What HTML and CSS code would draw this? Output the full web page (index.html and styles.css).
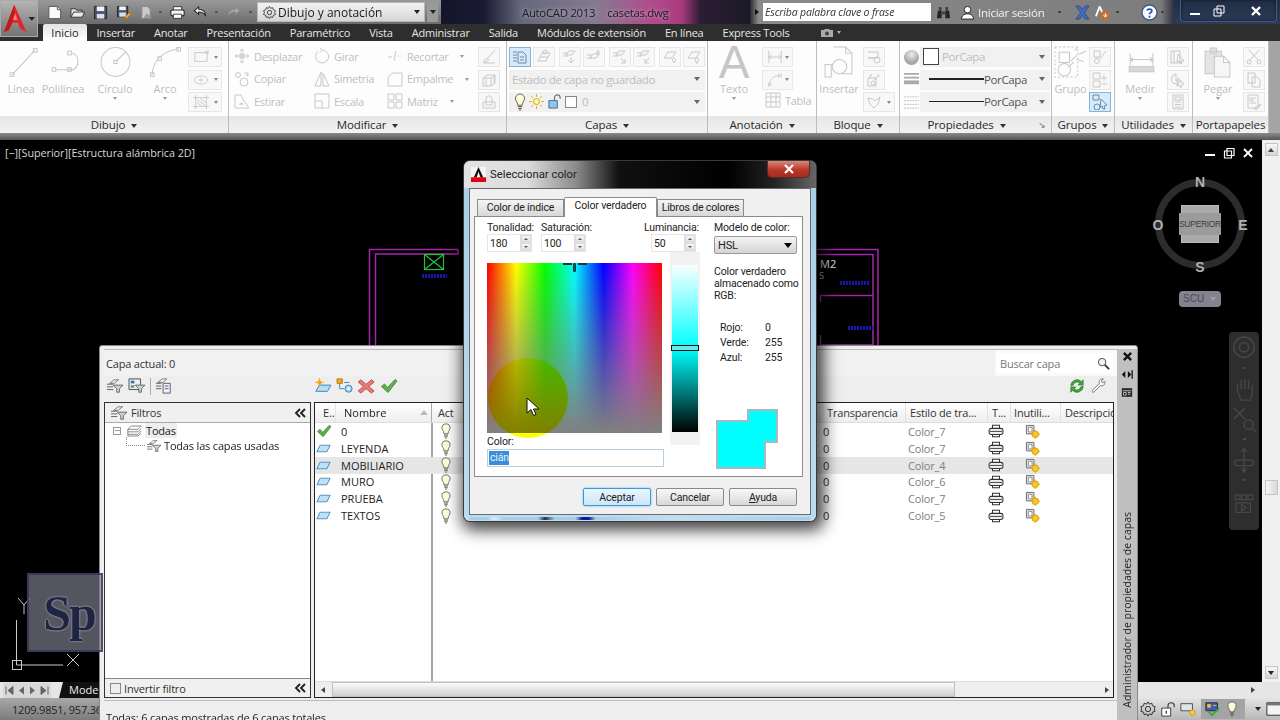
FILE: index.html
```html
<!DOCTYPE html>
<html lang="es">
<head>
<meta charset="utf-8">
<title>AutoCAD 2013 - casetas.dwg</title>
<link rel="stylesheet" href="styles.css">
</head>
<body>
<svg class="defs" aria-hidden="true">
  <symbol id="bulb" viewBox="0 0 12 18"><path d="M6 1a4.600 4.600 0 0 0-4.600 4.600c0 2 1.900 3 2.200 5.600v1h4.800v-1c.3-2.600 2.200-3.600 2.200-5.600A4.600 4.600 0 0 0 6 1z" fill="#fdfbe0" stroke="#66664e"/><path d="M3.800 13.600h4.400M4.200 15.400h3.600M5 17h2" stroke="#55553f" fill="none"/></symbol>
  <symbol id="layer" viewBox="0 0 18 10"><path d="M5 1h12l-4 8H1z" fill="#bfe1f6" stroke="#2c7db8"/></symbol>
  <symbol id="check" viewBox="0 0 18 16"><path d="M1.500 8.500l3-2.500 3 3.500L15 1.500l2 1.500L8 14.500z" fill="#5fb04a" stroke="#3c7d34" stroke-width=".8"/></symbol>
  <symbol id="printer" viewBox="0 0 18 16"><path d="M5 5V1.500h8V5M5 12v2.500h8V12" fill="#fff" stroke="#333" stroke-width="1.200"/><rect x="1" y="5" width="16" height="7" rx="2.500" fill="#eee" stroke="#333" stroke-width="1.200"/><path d="M2 8.500h14" stroke="#333"/></symbol>
  <symbol id="freeze" viewBox="0 0 16 16"><path d="M1.500 1.500h8v9h-8z" fill="#e8e8f0" stroke="#666"/><path d="M3.500 3.500h4v5h-4z" fill="#fff" stroke="#888"/><circle cx="11" cy="11" r="3.500" fill="#f8c81c" stroke="#d89a10"/><path d="M11 6v1.500M11 14.500V16M6 11h1.500M14.500 11H16" stroke="#e0a814"/></symbol>
  <symbol id="filter" viewBox="0 0 20 18"><path d="M1 7h7M1 10h7M1 13h7" stroke="#555" fill="none"/><path d="M4 6l5-4h5l-5 4z" fill="#eee" stroke="#555" stroke-width=".8"/><path d="M8 8h11l-4 4v4h-3v-4z" fill="#c8d4d8" stroke="#555" stroke-width=".9"/></symbol>
  <symbol id="chev" viewBox="0 0 12 10"><path d="M6 1L2 5l4 4M11 1L7 5l4 4" fill="none" stroke="#222" stroke-width="1.900"/></symbol>
</svg>

<div class="app">
  <header class="qbar">
    <div class="qa">
      <svg class="q" viewBox="0 0 16 16"><path d="M2 1.500h9l3.500 3.500v9.500H2z" fill="#fafafa" stroke="#555"/><path d="M11 1.500V5h3.500" fill="#ddd" stroke="#555"/></svg>
      <svg class="q" viewBox="0 0 16 16"><path d="M1 13V4h5l1 1.500h6V8" fill="#e9e2c4" stroke="#333"/><path d="M1 13l3-5.500h11.500L13 13z" fill="#e2eef5" stroke="#333"/></svg>
      <svg class="q" viewBox="0 0 16 16"><path d="M1.500 1.500h13v13h-13z" fill="#46546c" stroke="#222"/><path d="M4 1.500h8v5H4z" fill="#f2f2f2"/><path d="M4 9.500h8v5H4z" fill="#dde"/></svg>
      <svg class="q" viewBox="0 0 16 16"><path d="M1.500 1.500h11v11h-11z" fill="#46546c" stroke="#222"/><path d="M3.500 1.500h7v4h-7z" fill="#f2f2f2"/><path d="M3.500 8h7v4.500h-7z" fill="#dde"/><path d="M9 15l1-3 4-4 2 2-4 4z" fill="#f4a81c" stroke="#8a5a10" stroke-width=".6"/></svg>
      <svg class="q" viewBox="0 0 16 16"><path d="M3 1.500h6l3 3v10H3z" fill="#c9c9c9" stroke="#888"/><path d="M5 14.500l3-5 3 2 3 3z" fill="#9a9a9a" stroke="#777" stroke-width=".5"/></svg>
      <span class="dot d-plot"></span>
      <svg class="q q-print" viewBox="0 0 18 16"><path d="M4 5V1h10v4" fill="#fff" stroke="#222"/><rect x="1" y="5" width="16" height="7" rx="2" fill="#f5f5f5" stroke="#222" stroke-width="1.300"/><path d="M4 10h10v5H4z" fill="#fff" stroke="#222"/></svg>
      <svg class="q" viewBox="0 0 16 16"><path d="M6 2L1.500 6 6 10V7.500c4 0 6 1 7.500 4.500 0-5-3-7.500-7.500-7.500z" fill="#f2f2f2" stroke="#2a2a2a" stroke-width="1.100"/></svg>
      <span class="dot d-undo"></span>
      <svg class="q" viewBox="0 0 16 16"><path d="M10 2l4.500 4L10 10V7.500c-4 0-6 1-7.500 4.500 0-5 3-7.500 7.500-7.500z" fill="#a8a8a8" stroke="#8a8a8a"/></svg>
      <span class="dot d-redo"></span>
      <div class="wscombo">
        <svg class="gear" viewBox="0 0 16 16"><circle cx="8" cy="8" r="2.300" fill="none" stroke="#333"/><path d="M8 1.500l1.200 2 2.300-.6.600 2.300 2.300.9-1 2 1 2-2.300.8-.6 2.300-2.300-.6L8 14.500l-1.200-1.900-2.300.6-.6-2.300-2.300-.8 1-2-1-2 2.300-.9.600-2.300 2.300.6z" fill="none" stroke="#333" stroke-width=".9"/></svg>
        <span class="wstext">Dibujo y anotación</span>
        <span class="caret caret-dark"></span>
      </div>
      <span class="morebox"><span class="caret caret-dark"></span></span>
    </div>
    <div class="titlezone"><span class="title1">AutoCAD 2013</span><span class="title2">casetas.dwg</span></div>
    <div class="helpzone">
      <span class="tri-right"></span>
      <span class="search">Escriba palabra clave o frase</span>
      <svg class="hi hi-bino" viewBox="0 0 16 16"><path d="M2 6h4v8H1zM10 6h4l1 8h-5z" fill="#222"/><path d="M3 2h3v4H3zM10 2h3v4h-3zM6 7h4v3H6z" fill="#444"/></svg>
      <svg class="hi hi-user" viewBox="0 0 16 16"><circle cx="8" cy="5" r="3.500" fill="#fff" stroke="#222"/><path d="M1.500 15c.5-4 3-5.500 6.500-5.500s6 1.500 6.500 5.500z" fill="#fff" stroke="#222"/></svg>
      <span class="signin">Iniciar sesión</span>
      <span class="dot d-light d-sign"></span>
      <svg class="hi hi-x" viewBox="0 0 16 16"><path d="M1 1h4l3 4 3-4h4l-5 7 5 7h-4l-3-4-3 4H1l5-7z" fill="#3f6fc4" stroke="#1c2f70" stroke-width=".6"/></svg>
      <svg class="hi hi-a" viewBox="0 0 16 16"><path d="M5 1.500L1 12M5 1.500l3 7" stroke="#fff" stroke-width="2" fill="none"/><rect x="7" y="7" width="8" height="8" fill="#d4691c"/><path d="M11 8.500v3.500M9 10.500l2 2.500 2-2.500" stroke="#fff" fill="none"/></svg>
      <span class="dot d-light d-a"></span>
      <svg class="hi hi-help" viewBox="0 0 18 18"><circle cx="9" cy="9" r="8" fill="#f8fbff" stroke="#3c5a8c" stroke-width="1.500"/><path d="M6.500 7c0-2 5-2.500 5 .3 0 1.700-2.500 1.700-2.500 3.500M9 12.500v2" fill="none" stroke="#2a54a0" stroke-width="1.800"/></svg>
      <span class="dot d-light d-help"></span>
    </div>
    <div class="winctl">
      <div class="winbox">
        <svg class="wc" viewBox="0 0 12 12"><path d="M1 8h10v2H1z" fill="#fff"/></svg>
        <svg class="wc" viewBox="0 0 12 12"><path d="M4 1h7v7H4zM1 4h7v7H1z" fill="#23324a" stroke="#fff"/></svg>
        <svg class="wc wc-x" viewBox="0 0 12 12"><path d="M2 2l8 8M10 2l-8 8" stroke="#fff" stroke-width="2.400"/></svg>
      </div>
    </div>
  </header>

  <nav class="tabs">
    <span class="tab tab-on">Inicio</span><span class="tab">Insertar</span><span class="tab">Anotar</span><span class="tab">Presentación</span><span class="tab">Paramétrico</span><span class="tab">Vista</span><span class="tab">Administrar</span><span class="tab">Salida</span><span class="tab">Módulos de extensión</span><span class="tab">En línea</span><span class="tab">Express Tools</span>
    <svg class="cam" viewBox="0 0 14 10"><path d="M1 2h3l1-1h4l1 1h3v7H1z" fill="#aaa"/><circle cx="7" cy="5.500" r="2" fill="#444"/></svg><span class="caret caret-tab"></span>
  </nav>

  <section class="ribbon">
    <div class="panel p-draw">
      <div class="body">
        <div class="tool w42"><svg class="big pale" viewBox="0 0 32 32"><path d="M7 28L29 4"/><rect x="5" y="26" width="3.500" height="3.500"/><rect x="27.500" y="2.500" width="3.500" height="3.500"/></svg><span class="lbl">Línea</span></div>
        <div class="tool w42"><svg class="big pale" viewBox="0 0 32 32"><path d="M8 23h16M24 7c8 0 8 16 0 16"/><rect x="5" y="21" width="3.500" height="3.500"/><rect x="20" y="21" width="3.500" height="3.500"/><rect x="20" y="5" width="3.500" height="3.500"/></svg><span class="lbl">Polilínea</span></div>
        <div class="tool w62"><svg class="big pale" viewBox="0 0 32 32"><circle cx="16" cy="15.500" r="14"/><rect x="14.500" y="14" width="3" height="3"/><path d="M17 14.500l9-9"/></svg><span class="lbl">Círculo</span><span class="caret caret-pale"></span></div>
        <div class="tool w38"><svg class="big pale" viewBox="0 0 32 32"><path d="M3 28C4 15 12 5 29 3"/><rect x="1.500" y="26" width="3.500" height="3.500"/><rect x="8.500" y="10.500" width="3.500" height="3.500"/><rect x="27" y="1.500" width="3.500" height="3.500"/></svg><span class="lbl">Arco</span><span class="caret caret-pale"></span></div>
        <div class="sbcol">
          <div class="sb"><svg class="ic pale" viewBox="0 0 18 16"><path d="M2 3h14v10H2z"/><rect x="14.500" y="1.500" width="2.500" height="2.500"/></svg><span class="sbarrow"></span></div>
          <div class="sb"><svg class="ic pale" viewBox="0 0 18 16"><ellipse cx="9" cy="8" rx="7.500" ry="4.500"/><circle cx="9" cy="8" r="1.500"/></svg><span class="sbarrow"></span></div>
          <div class="sb"><svg class="ic pale" viewBox="0 0 18 16"><path d="M3 0v16M15 0v16M0 3h18M0 13h18M4 5l10 7M4 8l6 5M8 4l7 5"/></svg><span class="sbarrow"></span></div>
        </div>
      </div>
      <div class="ptitle">Dibujo <span class="caret"></span></div>
    </div>

    <div class="panel p-mod">
      <div class="body">
        <div class="modgrid">
          <div class="mi"><svg class="ic pale" viewBox="0 0 16 16"><path d="M8 1v14M1 8h14M6 3l2-2 2 2M6 13l2 2 2-2M3 6L1 8l2 2M13 6l2 2-2 2"/><rect x="6" y="6" width="4" height="4"/></svg>Desplazar</div>
          <div class="mi"><svg class="ic pale" viewBox="0 0 16 16"><path d="M4 3.500A6.500 6.500 0 1 0 9 2M6 0l2.500 2L6 4.500"/></svg>Girar</div>
          <div class="mi"><svg class="ic pale" viewBox="0 0 16 16"><path d="M1 9h4M9 3L7 13M11 8h1M14 8h1"/></svg>Recortar<span class="caret caret-pale ml"></span></div>
          <div class="mi"><svg class="ic pale" viewBox="0 0 16 16"><circle cx="4" cy="4" r="2.500"/><circle cx="10" cy="11" r="4"/><path d="M10 2h4v3M14 5l-2-1"/></svg>Copiar</div>
          <div class="mi"><svg class="ic pale" viewBox="0 0 16 16"><path d="M7 1v14H1zM9 2v13h6z"/></svg>Simetría</div>
          <div class="mi"><svg class="ic pale" viewBox="0 0 16 16"><path d="M1 15V9c0-4 3-7 7-7h7v13z"/></svg>Empalme<span class="caret caret-pale ml"></span></div>
          <div class="mi"><svg class="ic pale" viewBox="0 0 16 16"><path d="M1 2h6l3 6 5 7H1zM5 11h4l-2-1v2"/></svg>Estirar</div>
          <div class="mi"><svg class="ic pale" viewBox="0 0 16 16"><path d="M1 8V1h14v14H8"/><path d="M1 8h7v7H1z"/></svg>Escala</div>
          <div class="mi"><svg class="ic pale" viewBox="0 0 16 16"><path d="M1 1h6v6H1zM9 1h6v6H9zM1 9h6v6H1zM9 9h6v6H9z"/></svg>Matriz<span class="caret caret-pale ml"></span></div>
        </div>
        <div class="btncol">
          <div class="bt"><svg class="ic pale" viewBox="0 0 16 16"><path d="M14 1L6 10M2 14h12M3 13c0-3 3-4 4-3s0 3-4 3z"/></svg></div>
          <div class="bt"><svg class="ic pale" viewBox="0 0 16 16"><path d="M2 6l4-3h8v8l-4 3H2zM2 6h8v8M10 6l4-3M5 6v8M13 3v8"/></svg></div>
          <div class="bt"><svg class="ic pale" viewBox="0 0 16 16"><path d="M2 14V8h3V3c3-2 6-1 6 2v3h3v6z"/><path d="M5 8h6v3H5z"/></svg></div>
        </div>
      </div>
      <div class="ptitle">Modificar <span class="caret"></span></div>
    </div>

    <div class="panel p-layer">
      <div class="body bcol">
        <div class="lyicons">
          <div class="bt bt-on"><svg class="ic blueic" viewBox="0 0 16 16"><path d="M1 3h4M1 6h4M1 9h4M1 12h4"/><path d="M6 3h5l3 3v8H6z"/><path d="M8 8h4M8 11h4"/></svg></div>
          <div class="bt"><svg class="ic pale" viewBox="0 0 16 16"><path d="M4 8l2-4h8l-2 4zM2 12l2-4M2 12h8l2-4"/><circle cx="9" cy="3" r="2"/></svg></div>
          <div class="gapr"></div>
          <div class="bt"><svg class="ic pale" viewBox="0 0 16 16"><path d="M1 4h5M1 7h5M7 2h6l-3 4H4zM9 8v6M6 11l3 3 3-3"/></svg></div>
          <div class="bt"><svg class="ic pale" viewBox="0 0 16 16"><path d="M1 6h5M1 9h5M7 5h6l-3 4H4zM12 1l2 3h-4zM12 4v3"/></svg></div>
          <div class="gapr"></div>
          <div class="bt"><svg class="ic pale" viewBox="0 0 16 16"><path d="M1 4h5M1 7h5M7 2h6l-3 4H4zM9 9l4 5M13 10v4H9"/></svg></div>
          <div class="bt"><svg class="ic pale" viewBox="0 0 16 16"><path d="M1 4h5M1 7h5M7 2h6l-3 4H4zM13 9l-4 5M9 10v4h4"/></svg></div>
          <div class="gapr"></div>
          <div class="bt"><svg class="ic pale" viewBox="0 0 16 16"><path d="M2 9l4-6h8l-4 6zM10 11l2-2 2 2-2 3z"/></svg></div>
          <div class="bt"><svg class="ic pale" viewBox="0 0 16 16"><path d="M2 9l4-6h8l-4 6z"/><path d="M11 9c2 0 2 3 1 3v2h-2v-2c-1 0-1-3 1-3z"/></svg></div>
        </div>
        <div class="combo"><span class="ctext">Estado de capa no guardado</span><span class="caret caret-mid"></span></div>
        <div class="combo"><svg class="cb-bulb" viewBox="0 0 12 18"><use href="#bulb"/></svg>
          <svg class="cb-ic" viewBox="0 0 16 16"><circle cx="8" cy="8" r="3.200" fill="#fff6c0" stroke="#c8a400"/><path d="M8 0v3M8 13v3M0 8h3M13 8h3M2.300 2.300l2 2M11.700 11.700l2 2M2.300 13.700l2-2M11.700 4.300l2-2" stroke="#d2b000"/></svg>
          <svg class="cb-ic" viewBox="0 0 16 16"><path d="M2 7h9v8H2z" fill="#8fc6e8" stroke="#3b6f94"/><path d="M8 7V4c0-4 6-4 6 0v1" fill="none" stroke="#777" stroke-width="1.300"/></svg>
          <span class="swatch"></span><span class="ctext zero">0</span><span class="caret caret-mid"></span></div>
      </div>
      <div class="ptitle">Capas <span class="caret"></span></div>
    </div>

    <div class="panel p-anno">
      <div class="body">
        <div class="tool w52"><span class="bigA">A</span><span class="lbl">Texto</span><span class="caret caret-pale"></span></div>
        <div class="anno-right">
          <div class="sb sb-a"><svg class="ic pale" viewBox="0 0 18 16"><path d="M2 1v14M16 1v14M2 8h14M2 8l3-2M2 8l3 2M16 8l-3-2M16 8l-3 2"/></svg><span class="sbarrow"></span></div>
          <div class="sb sb-a"><svg class="ic pale" viewBox="0 0 18 16"><path d="M2 15c1-7 4-11 11-12"/><circle cx="3" cy="13" r="1.500"/><rect x="13" y="1.500" width="3" height="3"/></svg><span class="sbarrow"></span></div>
          <div class="mi"><svg class="ic pale ic-t" viewBox="0 0 16 16"><path d="M1 1h14v14H1zM1 5h14M1 10h14M6 1v14M11 1v14"/></svg>Tabla</div>
        </div>
      </div>
      <div class="ptitle">Anotación <span class="caret"></span></div>
    </div>

    <div class="panel p-block">
      <div class="body">
        <div class="tool w44"><svg class="big pale" viewBox="0 0 32 32"><path d="M10 1h12l6 6v20H18"/><path d="M22 1v6h6M2 18h6v12H2z"/><circle cx="16" cy="20" r="7"/></svg><span class="lbl">Insertar</span></div>
        <div class="btncol btncol-b">
          <div class="bt"><svg class="ic pale" viewBox="0 0 16 16"><path d="M2 3h10v6H2M2 9h6"/><circle cx="11" cy="11" r="3"/></svg></div>
          <div class="bt"><svg class="ic pale" viewBox="0 0 16 16"><path d="M2 6h8v8H2zM4 6V3h2M12 2l1 3M8 8l4-4"/><circle cx="7" cy="11" r="2"/></svg></div>
          <div class="bt bt-arrow"><svg class="ic pale" viewBox="0 0 16 16"><path d="M2 4l5 1 2 2 5-4-2 7-4 4-4-4z"/></svg><span class="sbarrow"></span></div>
        </div>
      </div>
      <div class="ptitle">Bloque <span class="caret"></span></div>
    </div>

    <div class="panel p-prop">
      <div class="body bcol propgrid">
        <div class="proprow"><span class="colorball"></span><div class="combo combo-p"><span class="swatch swatch-l"></span><span class="ctext">PorCapa</span><span class="caret caret-mid"></span></div></div>
        <div class="proprow"><svg class="lnic" viewBox="0 0 16 16"><path d="M0 2h16M0 6h16" stroke="#aaa" stroke-width="2"/><path d="M0 11h16" stroke="#aaa" stroke-width="4"/></svg><div class="combo combo-p"><span class="lnline"></span><span class="ctext dark">PorCapa</span><span class="caret caret-mid"></span></div></div>
        <div class="proprow"><svg class="lnic" viewBox="0 0 16 16"><path d="M0 2h16M0 6h16M0 10h16M0 14h16" stroke="#bbb" stroke-dasharray="2 1"/></svg><div class="combo combo-p"><span class="lnline lnline-b"></span><span class="ctext dark">PorCapa</span><span class="caret caret-mid"></span></div></div>
      </div>
      <div class="ptitle ptitle-prop"><span>Propiedades <span class="caret"></span></span><span class="launcher">↘</span></div>
    </div>

    <div class="panel p-group">
      <div class="body">
        <div class="tool w36"><svg class="big pale" viewBox="0 0 32 32"><path d="M1 1h22v29H1z" stroke-dasharray="2 2"/><path d="M5 6h10v10H5z"/><circle cx="10" cy="23" r="6"/><path d="M16 15l6-6M20 4l3-3M24 8l7-3M22 13l7 2M14 20l5-4"/></svg><span class="lbl">Grupo</span></div>
        <div class="btncol btncol-g">
          <div class="bt"><svg class="ic pale" viewBox="0 0 16 16"><path d="M2 2h6v6H2z"/><circle cx="5" cy="12" r="2.500"/><path d="M8 10l6-8"/></svg></div>
          <div class="bt"><svg class="ic pale" viewBox="0 0 16 16"><path d="M1 1h7v6H1zM1 9h7v6H1zM12 3v6M9 6h6M10 12h5"/></svg></div>
          <div class="bt bt-on"><svg class="ic blueic" viewBox="0 0 16 16"><path d="M1 1h6v5H1zM2 13a3 3 0 1 0 6 0 3 3 0 1 0-6 0M9 5l6 6-3 1 1 3-2 0-1-3-2 2z"/></svg></div>
        </div>
      </div>
      <div class="ptitle">Grupos <span class="caret"></span></div>
    </div>

    <div class="panel p-util">
      <div class="body">
        <div class="tool w50"><svg class="big pale" viewBox="0 0 32 32"><path d="M6 7v12M28 7v12M6 13h22M6 13l3-2M6 13l3 2M28 13l-3-2M28 13l-3 2"/><rect x="5" y="20" width="24" height="5" fill="#d8d8d8"/></svg><span class="lbl">Medir</span><span class="caret caret-pale"></span></div>
        <div class="btncol btncol-u">
          <div class="bt"><svg class="ic pale" viewBox="0 0 16 16"><path d="M1 2h9v12H1zM4 2v12M8 5l6 7-3 0 1 3-2-1-1-2-2 1z"/></svg></div>
          <div class="bt"><svg class="ic pale" viewBox="0 0 16 16"><path d="M6 2a5 5 0 1 0 5 7H6zM8 6l6 6-3 1 1 2-2 0-1-2-2 1z"/></svg></div>
          <div class="bt"><svg class="ic pale" viewBox="0 0 16 16"><path d="M3 1h10v14H3zM5 3h6v3H5zM5 8h6M5 10.500h6M5 13h6"/></svg></div>
        </div>
      </div>
      <div class="ptitle">Utilidades <span class="caret"></span></div>
    </div>

    <div class="panel p-clip">
      <div class="body">
        <div class="tool w50"><svg class="big pale" viewBox="0 0 32 32"><path d="M3 5h16v22H3zM8 2h6v5H8z" fill="#e4e4e4"/><path d="M12 10h9l6 6v14H12zM21 10v6h6" fill="#f6f6f6"/></svg><span class="lbl">Pegar</span><span class="caret caret-pale"></span></div>
        <div class="btncol">
          <div class="bt"><svg class="ic pale" viewBox="0 0 16 16"><path d="M3 1l9 10M13 1L4 11"/><circle cx="3" cy="13" r="2"/><circle cx="13" cy="13" r="2"/></svg></div>
          <div class="bt"><svg class="ic pale" viewBox="0 0 16 16"><path d="M2 1h7v10H2zM6 5h5l3 3v7H6z"/></svg></div>
          <div class="bt"><svg class="ic pale" viewBox="0 0 16 16"><path d="M2 1h10v13H2zM4 4h3v3H4zM8 4h2M4 9h6"/><path d="M8 15l6-5 1 1-5 5z"/></svg></div>
        </div>
      </div>
      <div class="ptitle">Portapapeles</div>
    </div>
    <div class="ribbon-end"></div>
  </section>
  <div class="sep"></div>

  <main class="work">
    <div class="viewrow">
      <div class="viewport">
        <span class="vplabel">[−][Superior][Estructura alámbrica 2D]</span>
        <svg class="cad" viewBox="0 0 1262 542" aria-hidden="true">
          <g fill="none" stroke="#a526a8" stroke-width="1.500">
            <path d="M369.500 205V109.500H458M458 109.500V114H375.500V205"/>
            <path d="M817 109.500H878V205M817 114.500H873V205M820.500 162V155.500H873M820.500 195V205H873"/>
          </g>
          <g fill="none" stroke="#1fc43a" stroke-width="1.200"><rect x="424.500" y="114.500" width="19" height="15"/><path d="M424.500 114.500l19 15M443.500 114.500l-19 15"/></g>
          <path d="M422 136h25M840 143h29M848 188h25" stroke="#1616b0" stroke-width="4" stroke-dasharray="2 1" fill="none"/>
          <g fill="none" stroke="#c8c8c8"><path d="M16.500 480V525H63"/><rect x="12.500" y="520.500" width="9" height="9"/><path d="M67 514l12 12M79 514l-12 12M18 458l6 7 6-7M24 465v9"/></g>
        </svg>
        <span class="m2">M2</span><span class="m2s">S</span>
        <div class="vpctl">
          <svg class="vc" viewBox="0 0 12 12"><path d="M1 7h10v2H1z" fill="#fff"/></svg>
          <svg class="vc" viewBox="0 0 12 12"><path d="M4 1.500h7v7H4zM1.500 4h7v7h-7z" fill="#000" stroke="#fff" stroke-width="1.200"/></svg>
          <svg class="vc" viewBox="0 0 12 12"><path d="M2 2l8 8M10 2l-8 8" stroke="#fff" stroke-width="1.800"/></svg>
        </div>
        <div class="compass">
          <span class="ring"></span>
          <span class="cubeface"><span class="cubein">SUPERIOR</span></span>
          <span class="cd cd-n">N</span><span class="cd cd-s">S</span><span class="cd cd-e">E</span><span class="cd cd-o">O</span>
        </div>
        <div class="scu">SCU <span class="caret caret-scu"></span></div>
        <div class="navbar">
          <svg class="nv" viewBox="0 0 26 30"><circle cx="13" cy="13" r="11"/><circle cx="13" cy="13" r="5"/></svg><span class="nvdot"></span>
          <svg class="nv" viewBox="0 0 26 30"><path d="M6 16V9M10 14V4M14 14V3M18 14V5M22 18V9M6 16l4 10h10l2-8"/></svg>
          <svg class="nv" viewBox="0 0 26 30"><path d="M2 2l12 12M14 2L2 14"/><circle cx="18" cy="20" r="5"/><path d="M22 24l4 4"/></svg><span class="nvdot"></span>
          <svg class="nv" viewBox="0 0 26 30"><path d="M13 1v26M5 14h16c3 0 3 6 0 6H5c-3 0-3-6 0-6zM10 5l3-4 3 4M10 23l3 4 3-4"/></svg><span class="nvdot"></span>
          <svg class="nv nv-last" viewBox="0 0 26 30"><path d="M2 1h6v6H2zM10 1h6v6h-6zM18 1h6v6h-6zM3 11h18v12H3zM10 13l6 4-6 4z"/></svg>
        </div>
      </div>
      <div class="vscroll"><span class="sbtn"><span class="sbtn-tri"></span></span><span class="sthumb"></span><span class="sbtn"><span class="caret caret-dark"></span></span></div>
    </div>
    <div class="modelrow">
      <div class="navbtns">
        <svg class="nb" viewBox="0 0 12 12"><path d="M3 2v8M10 2L5 6l5 4z" stroke="#666" fill="#666"/></svg>
        <svg class="nb" viewBox="0 0 12 12"><path d="M9 2L4 6l5 4z" fill="#666"/></svg>
        <svg class="nb" viewBox="0 0 12 12"><path d="M3 2l5 4-5 4z" fill="#666"/></svg>
        <svg class="nb" viewBox="0 0 12 12"><path d="M9 2v8M2 2l5 4-5 4z" stroke="#666" fill="#666"/></svg>
      </div>
      <span class="modeltab">Model</span>
      <span class="hscroll-r"><span class="tri-right tri-r2"></span></span>
    </div>
    <footer class="status">
      <span class="coords">1209.9851, 957.36</span>
      <div class="trayic">
        <svg class="ti" viewBox="0 0 18 18"><circle cx="9" cy="9" r="3" fill="none" stroke="#222"/><path d="M9 1l1.500 2.500 2.800-1 .7 3 3 .8-1 2.700 1 2.700-3 .8-.7 3-2.800-1L9 17l-1.500-2.500-2.800 1-.7-3-3-.8 1-2.700-1-2.700 3-.8.7-3 2.800 1z" fill="none" stroke="#222"/></svg>
        <svg class="ti" viewBox="0 0 18 18"><path d="M2 8h10v9H2z" fill="#fff" stroke="#333"/><path d="M9 8V5c0-4 7-4 7 0v2" fill="none" stroke="#333" stroke-width="1.200"/><path d="M7 11v3" stroke="#333" stroke-width="1.500"/></svg>
        <svg class="ti" viewBox="0 0 18 18"><path d="M1 3h13v8H1z" fill="#dfe4ea" stroke="#444"/><circle cx="14" cy="13" r="3" fill="#f8cc30" stroke="#c89a10"/></svg>
        <span class="trayon">
          <svg class="ti" viewBox="0 0 18 18"><path d="M1 2h13v9H1z" fill="#3a5fb4" stroke="#222"/><path d="M3 4h3v3H3zM9 5h4" fill="#f6c030" stroke="#f6c030"/><path d="M4 12l4 4 8-8" fill="none" stroke="#3aa83a" stroke-width="2"/></svg>
          <svg class="ti ti-b" viewBox="0 0 12 18"><use href="#bulb"/></svg>
        </span>
        <span class="caret caret-dark cm"></span>
        <svg class="ti ti-win" viewBox="0 0 18 18"><path d="M1 2h16v14H1z" fill="#f4f4f4" stroke="#222"/><path d="M1 2h16v3H1z" fill="#777"/></svg>
      </div>
    </footer>
  </main>

  <aside class="palette">
    <div class="palmain">
      <div class="palhead"><span class="current">Capa actual: 0</span><span class="findbox">Buscar capa<svg class="mag" viewBox="0 0 14 14"><circle cx="5.500" cy="5.500" r="4" fill="#eef3f7" stroke="#444"/><path d="M8.500 8.500L13 13" stroke="#333" stroke-width="2"/></svg></span></div>
      <div class="paltool">
        <svg class="pi" viewBox="0 0 20 18"><use href="#filter"/></svg>
        <svg class="pi" viewBox="0 0 20 18"><path d="M1 1h13v12H1z" fill="#e6eef4" stroke="#444"/><path d="M3 3h4v3H3z" fill="#3a6fb0"/><path d="M3 8h4v3H3z" fill="#888"/><path d="M8 8h11l-4 4v4h-3v-4z" fill="#c8d4d8" stroke="#555" stroke-width=".9"/></svg>
        <span class="psep"></span>
        <svg class="pi" viewBox="0 0 20 18"><path d="M1 6h6M1 9h6M1 12h6" stroke="#555"/><path d="M3 5l5-4h5l-4 4z" fill="#eee" stroke="#555" stroke-width=".8"/><path d="M9 6h8v11H9z" fill="#eef" stroke="#555"/><path d="M11 9h4M11 12h4" stroke="#555"/></svg>
        <span class="pspacer"></span>
        <svg class="pi" viewBox="0 0 20 18"><path d="M6 8h13l-4 7H2z" fill="#b8def6" stroke="#2c7db8"/><circle cx="6" cy="5" r="2.500" fill="#f3a81c"/><path d="M6 0v10M1 5h10" stroke="#f3a81c"/></svg>
        <svg class="pi" viewBox="0 0 20 18"><path d="M1 1h6v5H1z" fill="#f3a81c" stroke="#b8740c"/><path d="M9 5h6M4 6v6h5" stroke="#2c7db8" fill="none"/><circle cx="14" cy="12" r="4" fill="#a8d2ec" stroke="#2c7db8"/><circle cx="14" cy="12" r="1.500" fill="#fff"/></svg>
        <svg class="pi" viewBox="0 0 20 18"><path d="M3 2l6 5 6-5 3 2.500-6 5 6 5-3 2.500-6-5-6 5-3-2.500 6-5-6-5z" fill="#e87a7a" stroke="#b03232" stroke-width=".8"/></svg>
        <svg class="pi" viewBox="0 0 18 16"><use href="#check"/></svg>
        <span class="pspacer2"></span>
        <svg class="pi" viewBox="0 0 18 18"><path d="M2 9a7 7 0 0 1 12-5l2-2v6h-6l2-2a4 4 0 0 0-7 2zM16 9a7 7 0 0 1-12 5l-2 2v-6h6l-2 2a4 4 0 0 0 7-2z" fill="#3fa63f" stroke="#1f6a25" stroke-width=".6"/></svg>
        <svg class="pi" viewBox="0 0 18 18"><path d="M1.500 14l8-8c-1-3 1-5.500 4.500-5L11.500 3.500 13 5.500 15.500 4c.7 3.500-2 5.500-5 4.500l-8 8z" fill="#fff" stroke="#666"/></svg>
      </div>
      <div class="split">
        <div class="filters">
          <div class="fhead"><svg class="pi" viewBox="0 0 20 18"><use href="#filter"/></svg><span class="ftitle">Filtros</span><svg class="chev" viewBox="0 0 12 10"><use href="#chev"/></svg></div>
          <div class="ftree">
            <div class="tnode"><span class="minus"></span><svg class="tic" viewBox="0 0 18 14"><path d="M5 1h12l-4 4H1zM1 5v3h12l4-4M1 8v3h12l4-4M1 11v2h12l4-3" fill="#fff" stroke="#555" stroke-width=".8"/></svg><span class="tselect">Todas</span></div>
            <div class="tnode tnode-2"><span class="telbow"></span><svg class="tic tic2" viewBox="0 0 20 18"><use href="#filter"/></svg><span>Todas las capas usadas</span></div>
          </div>
          <div class="ffoot"><span class="chk"></span><span class="ftitle">Invertir filtro</span><svg class="chev" viewBox="0 0 12 10"><use href="#chev"/></svg></div>
        </div>
        <div class="table">
          <div class="row thead">
            <span class="c c-e">E..</span><span class="c c-n">Nombre<i class="sort"></i></span><span class="c c-a">Act</span><span class="c c-t hgap">Transparencia</span><span class="c c-s hgap2">Estilo de tra...</span><span class="c c-p hgap2">T...</span><span class="c c-u hgap2">Inutili...</span><span class="c c-d hgap2">Descripción</span>
          </div>
          <div class="tbody">
            <div class="row"><span class="c c-e"><svg class="chk-ic" viewBox="0 0 18 16"><use href="#check"/></svg></span><span class="c c-n">0</span><span class="c c-a"><svg class="bulb" viewBox="0 0 12 18"><use href="#bulb"/></svg></span><span class="c c-t">0</span><span class="c c-s">Color_7</span><span class="c c-p"><svg class="print" viewBox="0 0 18 16"><use href="#printer"/></svg></span><span class="c c-u"><svg class="frz" viewBox="0 0 16 16"><use href="#freeze"/></svg></span><span class="c c-d"></span></div>
            <div class="row"><span class="c c-e"><svg class="ly-ic" viewBox="0 0 18 10"><use href="#layer"/></svg></span><span class="c c-n">LEYENDA</span><span class="c c-a"><svg class="bulb" viewBox="0 0 12 18"><use href="#bulb"/></svg></span><span class="c c-t">0</span><span class="c c-s">Color_7</span><span class="c c-p"><svg class="print" viewBox="0 0 18 16"><use href="#printer"/></svg></span><span class="c c-u"><svg class="frz" viewBox="0 0 16 16"><use href="#freeze"/></svg></span><span class="c c-d"></span></div>
            <div class="row row-sel"><span class="c c-e"><svg class="ly-ic" viewBox="0 0 18 10"><use href="#layer"/></svg></span><span class="c c-n">MOBILIARIO</span><span class="c c-a"><svg class="bulb" viewBox="0 0 12 18"><use href="#bulb"/></svg></span><span class="c c-t">0</span><span class="c c-s">Color_4</span><span class="c c-p"><svg class="print" viewBox="0 0 18 16"><use href="#printer"/></svg></span><span class="c c-u"><svg class="frz" viewBox="0 0 16 16"><use href="#freeze"/></svg></span><span class="c c-d"></span></div>
            <div class="row"><span class="c c-e"><svg class="ly-ic" viewBox="0 0 18 10"><use href="#layer"/></svg></span><span class="c c-n">MURO</span><span class="c c-a"><svg class="bulb" viewBox="0 0 12 18"><use href="#bulb"/></svg></span><span class="c c-t">0</span><span class="c c-s">Color_6</span><span class="c c-p"><svg class="print" viewBox="0 0 18 16"><use href="#printer"/></svg></span><span class="c c-u"><svg class="frz" viewBox="0 0 16 16"><use href="#freeze"/></svg></span><span class="c c-d"></span></div>
            <div class="row"><span class="c c-e"><svg class="ly-ic" viewBox="0 0 18 10"><use href="#layer"/></svg></span><span class="c c-n">PRUEBA</span><span class="c c-a"><svg class="bulb" viewBox="0 0 12 18"><use href="#bulb"/></svg></span><span class="c c-t">0</span><span class="c c-s">Color_7</span><span class="c c-p"><svg class="print" viewBox="0 0 18 16"><use href="#printer"/></svg></span><span class="c c-u"><svg class="frz" viewBox="0 0 16 16"><use href="#freeze"/></svg></span><span class="c c-d"></span></div>
            <div class="row"><span class="c c-e"><svg class="ly-ic" viewBox="0 0 18 10"><use href="#layer"/></svg></span><span class="c c-n">TEXTOS</span><span class="c c-a"><svg class="bulb" viewBox="0 0 12 18"><use href="#bulb"/></svg></span><span class="c c-t">0</span><span class="c c-s">Color_5</span><span class="c c-p"><svg class="print" viewBox="0 0 18 16"><use href="#printer"/></svg></span><span class="c c-u"><svg class="frz" viewBox="0 0 16 16"><use href="#freeze"/></svg></span><span class="c c-d"></span></div>
          </div>
          <div class="tscroll"><span class="tri-left"></span><span class="tthumb"></span><span class="tri-right tri-r3"></span></div>
        </div>
      </div>
      <div class="palstatus">Todas: 6 capas mostradas de 6 capas totales</div>
    </div>
    <div class="palstrip">
      <svg class="strip-x" viewBox="0 0 12 12"><path d="M2 2l8 8M10 2l-8 8" stroke="#111" stroke-width="2.500"/></svg>
      <svg class="strip-i" viewBox="0 0 14 12"><path d="M5 2L1 6l4 4zM8 2l4 4-4 4z" fill="#111"/><path d="M13 1v10" stroke="#111" stroke-width="1.500"/></svg>
      <svg class="strip-i" viewBox="0 0 14 12"><path d="M1 1h12v10H1z" fill="#222"/><path d="M2 4h10M3 6h3v3H3zM8 6h3M8 8h3" stroke="#ddd"/></svg>
      <span class="striptext">Administrador de propiedades de capas</span>
    </div>
  </aside>

  <div class="sp"><span class="sptext">Sp</span></div>

  <div class="dialog">
    <div class="dtitle">
      <svg class="dlogo" viewBox="0 0 16 16"><path d="M0 0h16v11H0z" fill="#f4f4f4"/><path d="M0 11h16v5H0z" fill="#e8000c"/><path d="M8 0l5 11h-3L8 5l-2 6H3z" fill="#111"/></svg>
      <span class="dtext">Seleccionar color</span>
      <span class="dclose"><svg viewBox="0 0 12 10" class="dx"><path d="M2 1l8 8M10 1L2 9" stroke="#fff" stroke-width="2.200"/></svg></span>
    </div>
    <div class="client">
      <div class="dtabs"><span class="dtab">Color de índice</span><span class="dtab dtab-on">Color verdadero</span><span class="dtab">Libros de colores</span></div>
      <div class="tabpanel">
        <div class="tp-left">
          <div class="spins">
            <div class="spin sp1"><span>Tonalidad:</span><div class="spinbox"><span class="spinval">180</span><span class="updown"><i></i><i class="dn"></i></span></div></div>
            <div class="spin sp2"><span>Saturación:</span><div class="spinbox"><span class="spinval">100</span><span class="updown"><i></i><i class="dn"></i></span></div></div>
            <div class="spin sp3"><span>Luminancia:</span><div class="spinbox"><span class="spinval">50</span><span class="updown"><i></i><i class="dn"></i></span></div></div>
          </div>
          <div class="pickrow">
            <div class="picker"><span class="marker"></span></div>
            <div class="lumwrap"><div class="lum"><span class="lumhandle"></span></div></div>
          </div>
          <label class="colorlbl">Color:</label>
          <div class="colorinput"><span class="sel">cián</span></div>
        </div>
        <div class="tp-right">
          <div class="rlabel">Modelo de color:</div>
          <div class="hsl">HSL<span class="caret caret-black"></span></div>
          <p class="stored">Color verdadero almacenado como RGB:</p>
          <div class="rgb"><span>Rojo:</span><span>0</span><span>Verde:</span><span>255</span><span>Azul:</span><span>255</span></div>
          <svg class="swatchbig" viewBox="0 0 62 60"><path d="M1 59V12H32V1H61V33H49V59z" fill="#00ffff" stroke="#a8b8bc" stroke-width="2"/></svg>
        </div>
      </div>
      <div class="dbuttons"><span class="dbtn dbtn-def">Aceptar</span><span class="dbtn">Cancelar</span><span class="dbtn"><u>A</u>yuda</span></div>
    </div>
    <div class="glow"></div>
    <svg class="cursor" viewBox="0 0 14 20"><path d="M1 1v15l4-3.500 2.500 6 2.500-1-2.500-5.500H13z" fill="#fff" stroke="#111"/></svg>
  </div>
  <svg class="appbtn" viewBox="0 0 38 37">
    <defs><linearGradient id="agr" x1="0" y1="0" x2="0" y2="1"><stop offset="0" stop-color="#b4b4b4"/><stop offset="1" stop-color="#747474"/></linearGradient></defs>
    <rect width="38" height="37" fill="url(#agr)"/>
    <path d="M14 4L27 33 20 29 18 23H12L8 31 3 33z" fill="#e2252a"/><path d="M14 4L3 33 8 31 12 23 14 14z" fill="#c21a1a"/><path d="M15 13l2.500 7h-5z" fill="#f08080"/>
    <path d="M29 17h7l-3.500 4z" fill="#222"/>
  </svg>
</div>
</body>
</html>
```
FILE: styles.css
```css
*{box-sizing:border-box;margin:0;padding:0}
html,body{width:1280px;height:720px;overflow:hidden;background:#000}
body{font-family:"Open Sans","Noto Sans",sans-serif;font-size:11px;color:#222}
.defs{display:none}
.app{position:relative;width:1280px;height:720px;display:flex;flex-direction:column;overflow:hidden;filter:blur(.3px)}

/* top bar */
.qbar{height:24px;flex:none;display:flex;background:linear-gradient(#8a8a8a,#5e5e5e)}
.qa{width:441px;flex:none;display:flex;align-items:center;padding-left:47px;background:linear-gradient(#999,#6c6c6c)}
.q{width:15px;height:15px;margin-right:8px;flex:none}
.q-print{margin-left:-2px}
.dot{width:3px;height:2px;background:#555;flex:none}
.d-plot{margin:0 10px 0 -3px}
.d-undo{margin:0 8px 0 -1px}
.d-redo{margin:0 5px 0 0}
.wscombo{width:168px;height:20px;background:linear-gradient(#f2f2f2,#d6d6d6);display:flex;align-items:center;padding:0 4px;border:1px solid #b8b8b8;flex:none}
.gear{width:15px;height:15px;flex:none}
.wstext{font-size:12px;margin-left:1px;flex:1;white-space:nowrap;color:#1a1a1a}
.morebox{width:11px;height:20px;margin-left:2px;background:#9a9a9a;display:flex;align-items:center;justify-content:center;flex:none}
.morebox .caret{margin:0}
.caret{display:inline-block;width:0;height:0;border:3px solid transparent;border-top:4px solid #333;border-bottom:0;vertical-align:middle;margin-left:3px}
.caret-dark{border-top-color:#222}
.caret-pale{border-top-color:#999;border-width:2px;border-top-width:3px;border-bottom:0;margin:1px 0 0}
.caret-mid{border-top-color:#666;margin-left:auto}
.caret-tab{border-top-color:#aaa;border-width:2px;border-top-width:3px;border-bottom:0}
.caret-black{border-top-color:#000;border-width:4px;border-top-width:5px;border-bottom:0;margin-left:auto}
.ml{margin-left:8px}
.titlezone{width:309px;flex:none;display:flex;align-items:center;padding-left:81px;gap:12px;font-size:11.500px;color:#1c1c24;white-space:nowrap;letter-spacing:-.35px;background:linear-gradient(90deg,#14142a 0,#1a1a32 14%,#66687c 26%,#857a90 50%,#b04c8c 68%,#a83a7e 78%,#2c1c34 84%,#1a1a26 100%)}
.title1,.title2{text-shadow:0 0 5px rgba(255,255,255,.6)}
.helpzone{width:424px;flex:none;display:flex;align-items:center;padding-left:5px;background:linear-gradient(90deg,#2a2a34 0,#8a8a8a 2%,#7e7e7e 90%,#7a7a7a 97%,#2c3040 100%)}
.tri-right{display:inline-block;width:0;height:0;border:3px solid transparent;border-left:4px solid #111;border-right:0;flex:none}
.search{width:168px;height:18px;margin-left:4px;background:#fff;font-style:italic;font-size:10.500px;line-height:18px;padding-left:2px;color:#333;white-space:nowrap;flex:none;letter-spacing:-.15px}
.hi{width:15px;height:15px;flex:none}
.hi-bino{margin-left:5px}
.hi-user{margin-left:9px}
.signin{font-size:11.500px;color:#f2f2f2;margin-left:3px;white-space:nowrap;width:65px;letter-spacing:-.25px}
.d-light{background:#444}
.d-sign{margin-left:15px}
.hi-x{margin-left:14px}
.hi-a{margin-left:5px}
.d-a{margin-left:6px}
.hi-help{width:17px;height:17px;margin-left:22px}
.d-help{margin-left:3px}
.winctl{width:106px;flex:none;padding-left:6px;background:linear-gradient(#1f2e44,#2b3c58)}
.winbox{width:97px;height:22px;border:1px solid #4a5a74;border-top:0;border-radius:0 0 4px 4px;display:flex;align-items:center;padding-left:8px;box-shadow:inset 0 0 3px #0e1626}
.wc{width:12px;height:12px;margin-right:12px;flex:none}
.wc-x{margin-left:13px}

/* tabs */
.tabs{height:17px;flex:none;background:#2e2e2e;display:flex;align-items:center;padding-left:43px;color:#e6e6e6;font-size:11px;letter-spacing:-.22px}
.tab{padding:0 9.500px;white-space:nowrap;line-height:17px}
.tab-on{width:44px;padding:0;text-align:center;height:17px;background:linear-gradient(#e4e4e4,#fff);color:#222;border-radius:2px 2px 0 0;letter-spacing:0}
.cam{width:14px;height:10px;margin-left:21px}

/* ribbon */
.ribbon{height:92px;flex:none;display:flex;background:#fdfdfd;letter-spacing:-.1px}
.panel{display:flex;flex-direction:column;border-right:1px solid #bdbdbd;flex:none}
.p-draw{width:229px}.p-mod{width:278px}.p-layer{width:201px}.p-anno{width:109px}.p-block{width:83px}.p-prop{width:152px}.p-group{width:63px}.p-util{width:78px}.p-clip{width:76px}
.ribbon-end{flex:1;background:#a4a4a4}
.body{height:75px;display:flex;flex:none}
.ptitle{height:17px;flex:none;background:linear-gradient(#e6e6e6,#f2f2f2);text-align:center;line-height:17px;font-size:11.500px;color:#2a2a2a;white-space:nowrap;letter-spacing:-.1px}
.tool{display:flex;flex-direction:column;align-items:center;padding-top:5px;flex:none}
.w42{width:42px}.w62{width:62px}.w38{width:38px}.w52{width:52px}.w44{width:44px}.w36{width:36px}.w50{width:50px}
.big{width:33px;height:33px;flex:none}
.pale{fill:none;stroke:#c8c8c8;stroke-width:1}
.blueic{fill:none;stroke:#6a8aa8;stroke-width:1}
.lbl{font-size:11px;color:#bdbdbd;line-height:14px;margin-top:3px;white-space:nowrap}
.sbcol{display:flex;flex-direction:column;gap:2.500px;padding:6px 0 0 4px}
.sb{width:34px;height:20px;border:1px solid #e8e8e8;background:#f8f8f8;display:flex;align-items:center;padding-left:4px;flex:none}
.sbarrow{display:block;width:0;height:0;border:2px solid transparent;border-top:3px solid #888;border-bottom:0;margin-left:auto;margin-right:3px}
.ic{width:16px;height:16px;flex:none}
.modgrid{display:grid;grid-template-columns:80px 73px 90px;grid-auto-rows:22.500px;padding:4px 0 0 5px;width:249px;flex:none;align-content:start}
.mi{display:flex;align-items:center;gap:4px;font-size:11px;color:#bdbdbd;white-space:nowrap;letter-spacing:-.3px}
.btncol{display:flex;flex-direction:column;gap:2.500px;padding-top:6px;flex:none}
.btncol-u{margin-left:2px}
.bt{width:22px;height:20px;border:1px solid #e6e6e6;background:#f8f8f8;display:flex;align-items:center;justify-content:center;flex:none}
.bt-on{background:#d6eafa;border-color:#86b4d8}
.bcol{flex-direction:column;gap:2.500px;padding:6px 2px 0 2px}
.lyicons{display:flex;gap:2px;height:20px;flex:none}
.gapr{width:0}
.combo{height:20px;background:#f1f1f1;display:flex;align-items:center;padding:0 5px 1px 3px;flex:none;font-size:11.500px;color:#bdbdbd;white-space:nowrap;letter-spacing:-.38px}
.ctext{white-space:nowrap}
.cb-bulb{width:12px;height:18px;flex:none;margin-left:2px}
.cb-ic{width:15px;height:15px;margin-left:3px;flex:none}
.swatch{width:12px;height:12px;border:1px solid #888;background:#fff;margin-left:3px;flex:none}
.zero{margin-left:5px}
.bigA{font-family:"Liberation Sans",sans-serif;font-size:46px;line-height:33px;color:#c6c6c6;height:33px}
.anno-right{display:flex;flex-direction:column;gap:2.500px;padding:6px 0 0 2px}
.sb-a{width:31px}
.ic-t{margin-left:3px}
.btncol-b{margin-left:2px}
.bt-arrow{width:32px;justify-content:flex-start;padding-left:2px}
.propgrid{padding-left:4px;padding-right:1px}
.proprow{display:flex;align-items:center;height:20px;gap:1px;flex:none}
.colorball{width:15px;height:15px;border-radius:50%;background:radial-gradient(circle at 50% 30%,#eee,#aaa 60%,#999);flex:none}
.lnic{width:15px;height:15px;flex:none}
.combo-p{flex:1}
.swatch-l{width:16px;height:17px;margin:0 3px 0 0;border-color:#444}
.lnline{width:55px;height:1.500px;background:#222;margin-left:6px;flex:none}
.lnline-b{width:55px;margin-left:6px}
.dark{color:#555}
.ptitle-prop{display:flex;justify-content:center;position:relative;padding-right:18px}
.launcher{position:absolute;right:5px;font-size:9px;color:#777}
.btncol-g{margin-left:1px}
.p-group .tool{padding-left:1px}

/* workspace */
.sep{height:7px;flex:none;background:linear-gradient(#8a8a8a,#545454)}
.work{flex:1;display:flex;flex-direction:column;min-height:0}
.viewrow{flex:1;display:flex;min-height:0}
.viewport{flex:1;background:#000;position:relative;overflow:hidden}
.vplabel{position:absolute;left:5px;top:5px;color:#d8d8d8;font-size:10.800px;white-space:nowrap;letter-spacing:-.05px}
.cad{position:absolute;left:0;top:0;width:1262px;height:542px}
.m2{position:absolute;left:820px;top:116px;color:#e8e8e8;font-size:11px}
.m2s{position:absolute;left:819px;top:129px;color:#bbb;font-size:9px}
.vpctl{position:absolute;left:1204px;top:7px;display:flex;gap:7px}
.vc{width:12px;height:12px}
.compass{position:absolute;left:1150px;top:34px;width:100px;height:100px}
.ring{position:absolute;left:5px;top:5px;width:90px;height:90px;border-radius:50%;border:7px solid #2c2c2c}
.cubeface{position:absolute;left:31px;top:31px;width:38px;height:38px;background:#a9a9a9;border:1px solid #bbb;display:flex;align-items:center;justify-content:center}
.cubein{font-family:"Liberation Sans",sans-serif;font-size:8.500px;color:#3c3c44;letter-spacing:-.35px;background:#9b9b9b;padding:6px 0}
.cd{position:absolute;font:bold 14px "Liberation Sans",sans-serif;color:#b0b0b0;width:14px;text-align:center;line-height:14px}
.cd-n{left:43px;top:1px}.cd-s{left:43px;top:86px}.cd-e{left:86px;top:44px}.cd-o{left:1px;top:44px}
.scu{position:absolute;left:1179px;top:151px;width:42px;height:16px;border-radius:4px;background:#83838f;color:#4a4a54;font:10px/16px "Liberation Sans",sans-serif;padding-left:4px}
.caret-scu{border-top-color:#a0a0aa}
.navbar{position:absolute;left:1229px;top:192px;width:30px;height:198px;background:#2e2e2e;border-radius:4px;display:flex;flex-direction:column;align-items:center;padding-top:3px;gap:2px}
.nv{width:24px;height:28px;fill:none;stroke:#474747;stroke-width:1.500;flex:none}
.nv-last{margin-top:6px;height:24px}
.nvdot{width:3px;height:2px;background:#4a4a4a;margin:2px 0 5px;flex:none}
.vscroll{width:18px;flex:none;background:#f0f0f0;display:flex;flex-direction:column;align-items:center;padding:3px 0}
.sbtn{width:13px;height:13px;background:linear-gradient(#f8f8f8,#d4d4d4);border:1px solid #c4c4c4;display:flex;align-items:center;justify-content:center;flex:none}
.sbtn-tri{width:0;height:0;border:3px solid transparent;border-bottom:4px solid #444;border-top:0}
.sbtn .caret{margin:0}
.sthumb{width:13px;height:15px;margin:auto 0 171px;background:linear-gradient(90deg,#f6f6f6,#d8d8d8);border:1px solid #c4c4c4;flex:none}
.modelrow{height:16px;flex:none;display:flex;background:#e6e6e6;align-items:center}
.navbtns{display:flex;width:59px;padding-left:3px;flex:none}
.nb{width:12px;height:15px;background:#d8d8d8;flex:none}
.modeltab{width:41px;height:16px;background:#111;color:#eee;font-size:11px;line-height:16px;padding-left:10px;flex:none;clip-path:polygon(4px 0,100% 0,100% 100%,0 100%)}
.hscroll-r{margin-left:auto;width:143px;display:flex;justify-content:flex-end;padding-right:25px}
.tri-r2{border-left-color:#444}
.status{height:22px;flex:none;display:flex;align-items:center;background:linear-gradient(#a8a8a8,#7c7c7c);padding-left:12px;justify-content:space-between}
.coords{font-size:11px;color:#222;white-space:nowrap;letter-spacing:-.2px}
.trayic{width:143px;height:22px;flex:none;display:flex;align-items:center;gap:4px;padding-left:3px;background:linear-gradient(#e4e4e4,#b8b8b8)}
.ti{width:16px;height:16px;flex:none}
.ti-b{width:12px}
.trayon{display:flex;gap:5px;padding:2px 7px 2px 4px;background:#a4a4a4;margin-left:1px;flex:none}
.cm{margin:0 0 0 6px}
.ti-win{width:16px;height:16px;margin-left:1px}

/* watermark */
.sp{position:absolute;left:27px;top:573px;width:76px;height:79px;background:rgba(125,125,140,.68);border:2px solid rgba(50,50,85,.75);display:flex;align-items:center;justify-content:center;padding-left:8px}
.sptext{font:bold 50px/1 "Liberation Serif",serif;color:#1f2440;letter-spacing:-2px;text-shadow:0 0 2px #ccd,0 0 1px #778}

/* palette */
.palette{position:absolute;left:99px;top:345px;width:1039px;height:385px;display:flex;background:#eee;border:1px solid #888;border-radius:3px 3px 0 0;padding-top:3px}
.palmain{width:1017px;flex:none;display:flex;flex-direction:column;padding-left:4px;letter-spacing:-.18px}
.palhead{height:27px;display:flex;align-items:center;justify-content:space-between;border-top:1px solid #bbb;padding:0 4px 0 2px;font-size:11px;flex:none;background:linear-gradient(90deg,#f1f1f1 0,#f1f1f1 88%,#fafafa 88%)}
.current{color:#333}
.findbox{width:116px;height:20px;background:#fff;color:#777;display:flex;align-items:center;padding:0 3px;justify-content:space-between}
.mag{width:13px;height:13px}
.paltool{height:26px;display:flex;align-items:center;flex:none;padding:0 0 6px 2px;gap:4px}
.pi{width:18px;height:16px;flex:none}
.psep{width:1px;height:17px;background:#aaa}
.pspacer{width:133px;flex:none}
.pspacer2{width:662px;flex:none}
.split{display:flex;gap:3px;height:296px;flex:none}
.filters{width:207px;flex:none;border:1px solid #333;display:flex;flex-direction:column;background:#fff}
.fhead,.ffoot{height:19px;background:#f0f0f0;display:flex;align-items:center;padding-left:5px;flex:none}
.fhead{border-bottom:1px solid #aaa;height:20px}
.ffoot{border-top:1px solid #888;margin-top:auto}
.ftitle{margin-left:3px;font-size:11px;color:#333}
.chev{width:12px;height:10px;margin-left:auto;margin-right:4px}
.ftree{color:#222;font-size:11px}
.tnode{display:flex;align-items:center;height:15px;padding-left:8px;white-space:nowrap}
.tnode-2{padding-left:40px;position:relative;gap:1px}
.minus{width:8px;height:8px;border:1px solid #999;background:linear-gradient(#999,#999) center/5px 1px no-repeat #fff;flex:none;margin-right:6px}
.tic{width:15px;height:14px;flex:none}
.tic2{width:18px}
.tselect{background:#eee;padding:0 1px;margin-left:3px}
.telbow{width:19px;height:9px;border-left:1px dotted #888;border-bottom:1px dotted #888;position:absolute;left:21px;top:-1px}
.chk{width:11px;height:11px;border:1px solid #888;background:#eee;flex:none}
.table{width:800px;flex:none;border:1px solid #222;display:flex;flex-direction:column;background:#fff;overflow:hidden}
.row{display:grid;grid-template-columns:20px 96px 392px 82px 82px 23px 50px 54px;height:16.850px;align-items:center;flex:none}
.row-sel{background:#e6e6e6}
.thead{height:20px;background:linear-gradient(#fff,#eee);border-bottom:1px solid #ddd;color:#333}
.c{white-space:nowrap;overflow:hidden;display:flex;align-items:center;height:100%}
.c-e{padding-left:1px}
.thead .c-e{padding-left:8px}
.thead .c-n{padding-left:8px;position:relative;border-left:1px solid #e4e4e4}
.c-n{padding-left:6px;color:#222;letter-spacing:0}
.sort{position:absolute;right:3px;top:7px;width:0;height:0;border:4px solid transparent;border-bottom:5px solid #bbb;border-top:0}
.c-a{padding-left:9px}
.thead .c-a{padding-left:6px;border-left:1px solid #aaa}
.c-t{padding-left:0;color:#333}
.thead .c-t{padding-left:3px}
.hgap{border-left:1px solid #eee}
.hgap2{border-left:1px solid #e2e2e2}
.c-s{padding-left:3px;color:#808080}
.thead .c-s{padding-left:4px;color:#333}
.c-p{padding-left:1px}
.thead .c-p{padding-left:4px}
.c-u{padding-left:15px}
.thead .c-u{padding-left:3px}
.thead .c-d{padding-left:4px}
.tbody{flex:1;background:linear-gradient(#a4a4a4,#a4a4a4) 116px 0/2px 100% no-repeat;min-height:0}
.bulb{width:12px;height:16px}
.chk-ic{width:16px;height:14px}
.ly-ic{width:15px;height:9px}
.print{width:16px;height:14px}
.frz{width:15px;height:15px}
.tscroll{height:16px;background:#eee;display:flex;align-items:center;padding-left:6px;flex:none;border-top:1px solid #ddd}
.tri-left{width:0;height:0;border:3px solid transparent;border-right:4px solid #444;border-left:0;flex:none}
.tthumb{width:623px;height:15px;margin-left:7px;background:linear-gradient(#fbfbfb,#cfcfcf);border:1px solid #c0c0c0;flex:none}
.tri-r3{margin-left:150px;border-left-color:#444}
.palstatus{height:40px;padding:9px 0 0 2px;font-size:11px;color:#222;white-space:nowrap;border-top:1px solid #bbb;margin-top:2px}
.palstrip{width:20px;flex:none;background:#c0c0c0;display:flex;flex-direction:column;align-items:center;padding-top:2px;gap:7px}
.strip-x{width:11px;height:11px}
.strip-i{width:12px;height:11px}
.striptext{writing-mode:vertical-rl;transform:rotate(180deg);font-size:10.500px;color:#222;white-space:nowrap;position:absolute;right:3px;top:166px;line-height:14px}

/* dialog */
.dialog{position:absolute;left:464px;top:161px;width:352px;height:360px;border-radius:6px;background:linear-gradient(#a8cde6,#bcdcf2);box-shadow:0 0 0 1px #3a3a3a,3px 4px 16px 5px rgba(0,0,0,.75)}
.dialog::after{content:"";position:absolute;left:6px;right:6px;bottom:1px;height:3px;background:linear-gradient(90deg,#a8cde6 0,#a8cde6 5%,#e0e8f0 7%,#a8cde6 10%,#a8cde6 20%,#2a3040 22%,#a8cde6 25%,#a8cde6 31%,#0e1a9a 33%,#0e1a9a 35%,#a8cde6 37%,#c8dcec 60%,#a8cde6 100%)}
.dtitle{height:27px;border-radius:6px 6px 0 0;display:flex;align-items:center;padding:0 0 1px 7px;position:relative;background:linear-gradient(90deg,#e2e2e2 0,#dcdcdc 18%,#8a8a8a 32%,#101010 44%,#000 75%,#222 88%,#666 100%)}
.dlogo{width:15px;height:15px;flex:none}
.dtext{margin-left:4px;font-family:Roboto,"Open Sans",sans-serif;font-size:11.300px;color:#222}
.dclose{position:absolute;right:6px;top:0;width:43px;height:17px;border-radius:0 0 5px 5px;background:linear-gradient(#d88a7c,#b8362a 55%,#a82a20);display:flex;align-items:center;justify-content:center;border:1px solid #5a2a24;border-top:0}
.dx{width:12px;height:10px}
.client{margin:0 5px;height:327px;background:#f0f0f0;border:1px solid #6a6a6a;font-family:Roboto,"Open Sans",sans-serif;font-size:10.500px;letter-spacing:-.15px;color:#222;padding:8px 7px 0 4px;display:flex;flex-direction:column;position:relative;z-index:1}
.dtabs{display:flex;height:19px;padding-left:3px;flex:none;position:relative;z-index:1;align-items:flex-end}
.dtab{height:17px;line-height:16px;width:87px;text-align:center;background:linear-gradient(#f4f4f4,#d8d8d8);border:1px solid #8c8c8c;border-bottom:0;white-space:nowrap}
.dtab-on{height:20px;line-height:15px;width:93px;background:#fff;border-radius:2px 2px 0 0;margin-bottom:-1px}
.tabpanel{height:261px;background:#fff;border:1px solid #8c8c8c;display:flex;padding:4px 0 0 12px;flex:none}
.tp-left{width:217px;flex:none;display:flex;flex-direction:column}
.spins{display:flex;height:36px;flex:none}
.spin{display:flex;flex-direction:column;white-space:nowrap}
.sp1{width:54px}.sp2{width:103px}.sp3{width:60px}
.spin>span:first-child{line-height:13px}
.spinbox{height:18px;width:45px;margin-top:0;display:flex;align-items:center;padding-left:2px;border:1px solid #e6e6e6;background:#fff;justify-content:space-between}
.sp3 .spinbox{margin-left:7px}
.updown{width:11px;height:16px;display:flex;flex-direction:column;border-left:1px solid #ddd}
.updown i{flex:1;background:linear-gradient(#f6f6f6,#dedede);position:relative;display:block;border:1px solid #ddd}
.updown i::after{content:"";position:absolute;left:2px;top:2px;border:2px solid transparent;border-bottom:2px solid #556;border-top:0}
.updown i.dn::after{border-bottom:0;border-top:2px solid #556}
.pickrow{display:flex;margin-top:1px;height:183px;flex:none;position:relative}
.picker{width:175px;height:170px;position:relative;margin-top:5px;background:linear-gradient(to top,#808080,rgba(128,128,128,0)),linear-gradient(90deg,#f00 0,#ff0 16.600%,#0f0 33.300%,#0ff 50%,#00f 66.600%,#f0f 83.300%,#f00 100%)}
.marker{position:absolute;left:86px;top:0;width:3px;height:9px;background:#115a66;border:1px solid #0a3a44;border-radius:1px}
.marker::before{content:"";position:absolute;left:-11px;top:-1px;width:24px;height:2px;background:linear-gradient(90deg,#234 0,#234 9px,transparent 9px,transparent 15px,#234 15px)}
.lumwrap{width:30px;height:193px;margin:-6px 0 0 8px;background:#f2f2f2;padding:13px 2px 0;flex:none}
.lum{height:167px;position:relative;background:linear-gradient(#f8ffff 0,#0ff 50%,#000 100%)}
.lumhandle{position:absolute;left:-1px;right:-1px;top:80px;height:6px;background:#6ae8e8;border:1px solid #111}
.colorlbl{line-height:13px;flex:none;margin-top:-6px}
.colorinput{width:177px;height:18px;border:1px solid #b8cfdf;margin-top:1px;padding:1px;flex:none;line-height:14px}
.sel{background:#3a8ed8;color:#e8f2fa;display:inline-block;padding:0 0 0 1px;width:20px}
.tp-right{flex:1;padding-left:10px;min-width:0}
.rlabel{line-height:14px;white-space:nowrap}
.hsl{width:83px;height:18px;border:1px solid #999;border-radius:2px;background:linear-gradient(#f4f4f4,#d4d4d4);line-height:17px;padding:0 4px 0 3px;margin-top:1px;display:flex;align-items:center;font-size:11px}
.stored{width:90px;line-height:12px;margin-top:12px}
.rgb{display:grid;grid-template-columns:45px 30px;line-height:15px;margin:18px 0 0 6px}
.swatchbig{width:62px;height:60px;display:block;margin:44px 0 0 2px}
.dbuttons{display:flex;justify-content:flex-end;gap:5px;padding:11px 6px 0 0}
.dbtn{width:68px;height:18px;border:1px solid #8a8a8a;border-radius:2px;background:linear-gradient(#f8f8f8,#d8d8d8);text-align:center;line-height:17px}
.dbtn-def{border-color:#3a9ad8;box-shadow:0 0 2px #4ab0f0;background:linear-gradient(#e8f6fe,#cfe6f6)}
.glow{position:absolute;left:24px;top:197px;width:80px;height:80px;border-radius:50%;background:#ff0;mix-blend-mode:multiply;z-index:2}
.cursor{position:absolute;left:62px;top:236px;width:14px;height:20px;z-index:3}
.appbtn{position:absolute;left:0;top:0;width:38px;height:37px;border:1px solid #aaa}
```
